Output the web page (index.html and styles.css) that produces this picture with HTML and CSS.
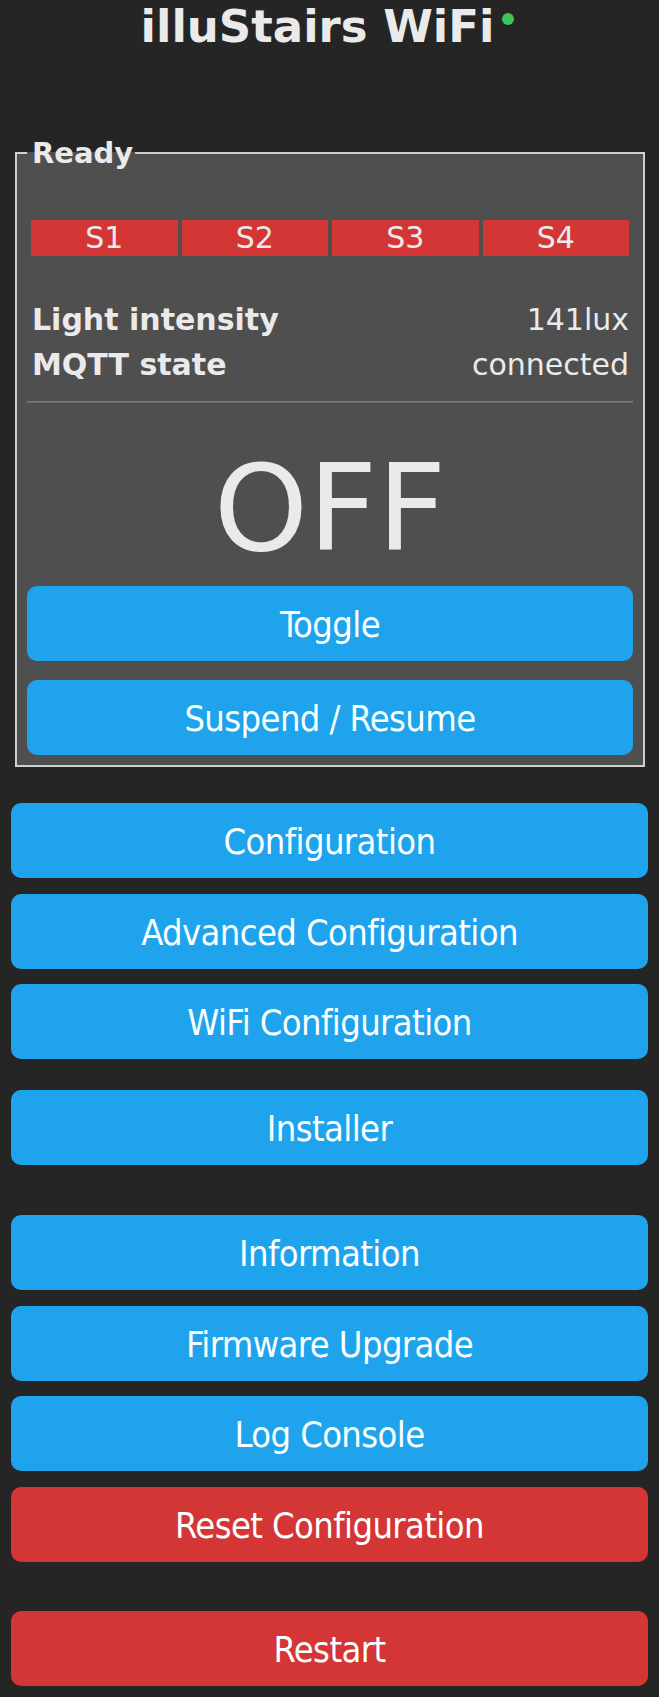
FILE: index.html
```
<!DOCTYPE html>
<html lang="en">
<head>
<meta charset="utf-8">
<title>illuStairs WiFi</title>
<link rel="stylesheet" href="styles.css">
</head>
<body>
<div class="page">
  <h1 class="title">illuStairs WiFi<span class="dot"></span></h1>

  <fieldset class="panel">
    <legend class="legend">Ready</legend>
    <div class="sensors">
      <div class="sensor">S1</div>
      <div class="sensor">S2</div>
      <div class="sensor">S3</div>
      <div class="sensor">S4</div>
    </div>
    <div class="info">
      <div class="row"><span class="label">Light intensity</span><span class="value">141lux</span></div>
      <div class="row"><span class="label">MQTT state</span><span class="value">connected</span></div>
    </div>
    <hr class="sep">
    <div class="state">OFF</div>
    <div class="stack">
      <button class="btn">Toggle</button>
      <button class="btn">Suspend / Resume</button>
    </div>
  </fieldset>

  <div class="stack group-config">
    <button class="btn">Configuration</button>
    <button class="btn">Advanced Configuration</button>
    <button class="btn">WiFi Configuration</button>
  </div>

  <div class="stack group-installer">
    <button class="btn">Installer</button>
  </div>

  <div class="stack group-tools">
    <button class="btn">Information</button>
    <button class="btn">Firmware Upgrade</button>
    <button class="btn">Log Console</button>
    <button class="btn btn-red">Reset Configuration</button>
  </div>

  <div class="stack group-restart">
    <button class="btn btn-red">Restart</button>
  </div>
</div>
</body>
</html>
```

FILE: styles.css
```
html, body {
  margin: 0;
  padding: 0;
}

body {
  background: #252525;
  color: #eaeaea;
  font-family: "DejaVu Sans", Verdana, sans-serif;
}

.page {
  padding: 0 11px 0 11px;
}

.title {
  margin: 1px 0 0;
  padding-right: 4px;
  font-size: 45px;
  line-height: 52px;
  font-weight: bold;
  text-align: center;
  color: #eaeaea;
}

.dot {
  display: inline-block;
  width: 12px;
  height: 12px;
  margin-left: 8px;
  border-radius: 50%;
  background: #3fc35f;
  vertical-align: 17px;
}

.panel {
  margin: 83px 3px 0 4px;
  padding: 0 10px 10px;
  border: 2px solid #cfcfcf;
  background: #4f4f4f;
  min-width: 0;
}

.legend {
  padding: 0 2px 0 5px;
  font-size: 29px;
  line-height: 34px;
  font-weight: bold;
  color: #eaeaea;
}

.sensors {
  display: grid;
  grid-template-columns: repeat(4, 1fr);
  gap: 4px;
  padding: 4px;
  margin-top: 46px;
}

.sensor {
  background: #d43535;
  color: #eaeaea;
  font-size: 30px;
  line-height: 36px;
  text-align: center;
}

.info {
  margin-top: 37px;
  padding: 0 4px 0 5px;
}

.row {
  display: flex;
  justify-content: space-between;
  font-size: 30px;
  line-height: 45px;
}

.label {
  font-weight: bold;
}

.sep {
  margin: 14px 0 0;
  border: 0;
  border-top: 1px solid #7a7a7a;
  border-bottom: 1px solid #6a6a6a;
}

.state {
  margin-top: 36px;
  font-size: 120px;
  line-height: 140px;
  text-align: center;
  color: #eaeaea;
}

.stack {
  display: flex;
  flex-direction: column;
  gap: 19px;
}

.panel .stack {
  margin-top: 7px;
}

.btn {
  display: block;
  width: 100%;
  height: 75px;
  padding: 0 6px;
  border: 0;
  border-radius: 10px;
  background: #1fa3ec;
  color: #faffff;
  font-family: "DejaVu Sans Condensed", "DejaVu Sans", sans-serif;
  font-stretch: condensed;
  font-size: 36px;
  letter-spacing: -0.6px;
  line-height: 77px;
  text-align: center;
  cursor: pointer;
}

.btn-red {
  background: #d43535;
}

.group-config,
.group-installer,
.group-tools,
.group-restart {
  gap: 15.5px;
}

.group-config {
  margin-top: 36px;
}

.group-installer {
  margin-top: 31px;
}

.group-tools {
  margin-top: 50px;
}

.group-restart {
  margin-top: 49px;
}
```
